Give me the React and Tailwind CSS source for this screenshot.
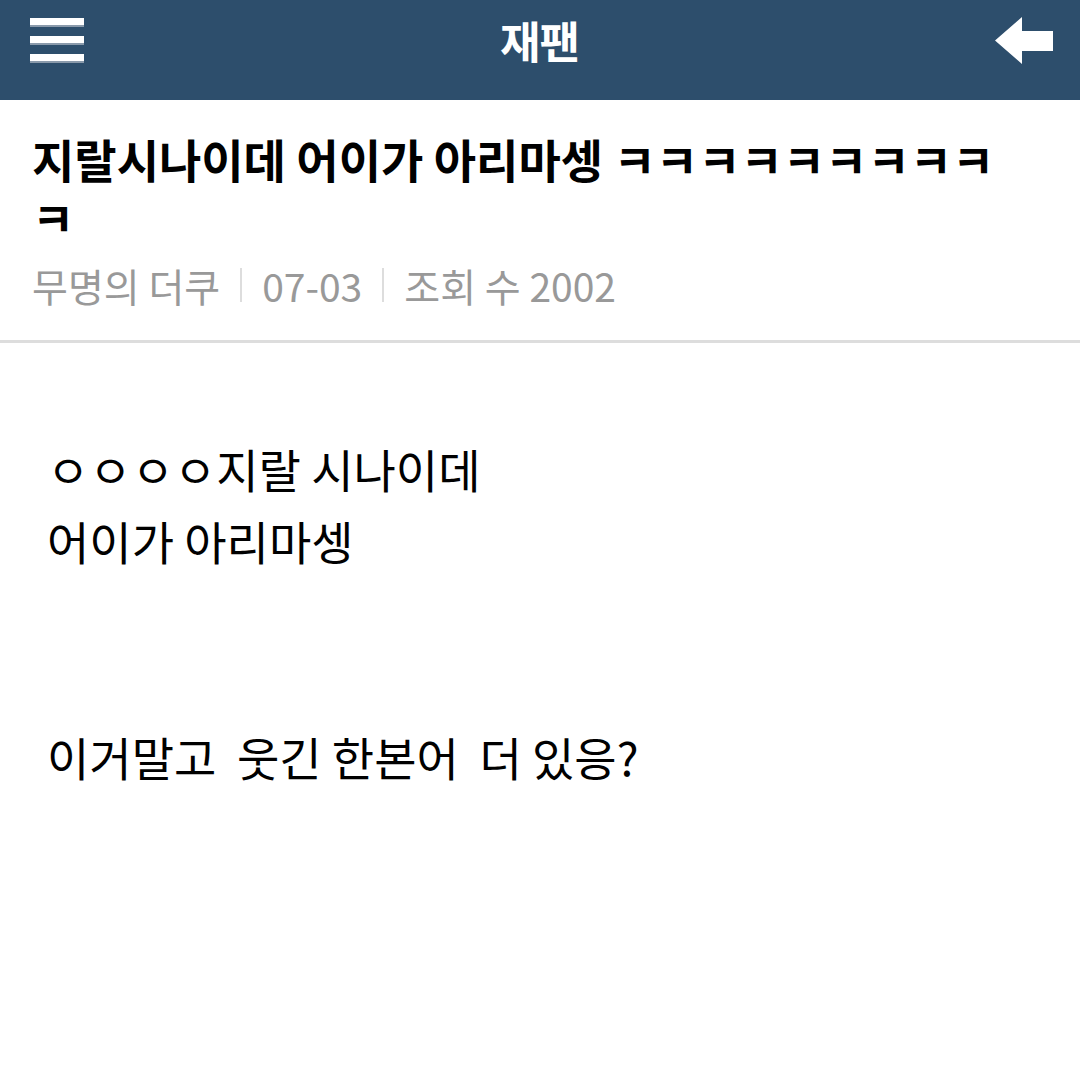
import React from "react";

const FONT = { fontFamily: '"Noto Sans CJK KR", "Noto Sans", sans-serif' };

// Hamburger menu icon (three thick bars)
const MenuIcon = () => (
  <div className="flex flex-col gap-[9px] w-[54px]">
    {[0, 1, 2].map((i) => (
      <div key={i} className="h-[9px] w-full bg-white border-b-2 border-[#8a9aab]" />
    ))}
  </div>
);

// Back arrow icon
const BackIcon = () => (
  <svg width="58" height="48" viewBox="0 0 58 48">
    <path d="M0 23.5 L27 0 L27 14 L58 14 L58 34 L27 34 L27 47 Z" fill="#ffffff" />
  </svg>
);

export default function App() {
  const body = [
    "ㅇㅇㅇㅇ지랄 시나이데",
    "어이가 아리마셍",
    "",
    "",
    "이거말고  웃긴 한본어  더 있응?",
  ];

  return (
    <div className="min-h-screen bg-white" style={FONT}>
      {/* Top bar */}
      <header className="h-[100px] bg-[#2d4e6c] flex items-start justify-between px-[30px]">
        <div className="pt-[18px]">
          <MenuIcon />
        </div>
        <h1 className="text-white font-bold text-[44px] leading-[80px] tracking-[-1px]">재팬</h1>
        <div className="pt-[17px] -mr-[3px]">
          <BackIcon />
        </div>
      </header>

      {/* Post heading */}
      <section className="px-[32px] pt-[29px] pb-[33px] border-b-[3px] border-[#dddddd]">
        <h2 className="text-[46px] leading-[58px] font-bold text-black pr-[30px]">
          지랄시나이데 어이가 아리마셍 ㅋㅋㅋㅋㅋㅋㅋㅋㅋㅋ
        </h2>
        <div className="mt-[18px] flex items-center text-[39px] leading-[44px] text-[#999999]">
          <span>무명의 더쿠</span>
          <span className="mx-[20px] w-[2px] h-[34px] bg-[#dddddd]" />
          <span>07-03</span>
          <span className="mx-[20px] w-[2px] h-[34px] bg-[#dddddd]" />
          <span>조회 수 2002</span>
        </div>
      </section>

      {/* Post body */}
      <article className="px-[47px] pt-[89px] text-[46px] leading-[72px] text-black whitespace-pre-wrap">
        {body.map((line, i) => (
          <p key={i} className="h-[72px]">
            {line}
          </p>
        ))}
      </article>
    </div>
  );
}
